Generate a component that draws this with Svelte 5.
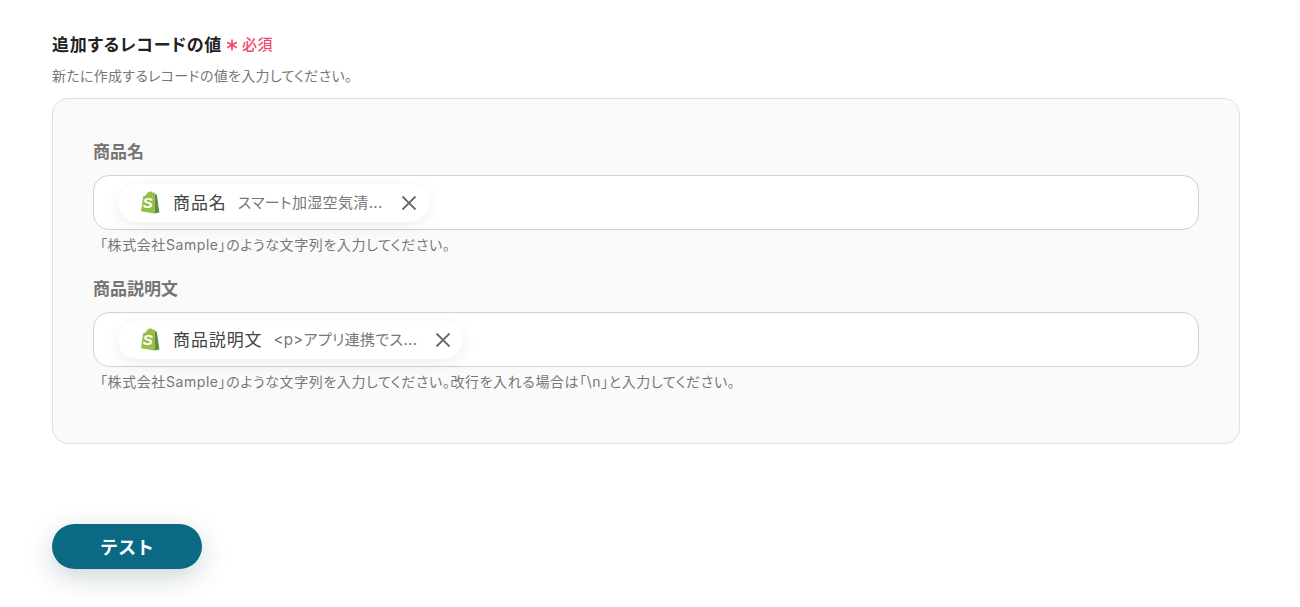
<script>
  const fields = [
    {
      label: "商品名",
      value: "スマート加湿空気清...",
      hint: "「株式会社Sample」のような文字列を入力してください。"
    },
    {
      label: "商品説明文",
      value: "<p>アプリ連携でス...",
      hint: "「株式会社Sample」のような文字列を入力してください。改行を入れる場合は「\\n」と入力してください。"
    }
  ];
</script>

<div class="page">
  <div class="title-row">
    <span class="title">追加するレコードの値</span>
    <svg class="star" viewBox="0 0 12 12" width="12" height="12">
      <path d="M6 0.5 V11.5 M1.2 3.2 L10.8 8.8 M10.8 3.2 L1.2 8.8" stroke="#f4476b" stroke-width="1.7" fill="none" />
    </svg>
    <span class="required">必須</span>
  </div>
  <p class="desc">新たに作成するレコードの値を入力してください。</p>

  <div class="card">
    {#each fields as field}
      <div class="field">
        <div class="label">{field.label}</div>
        <div class="input">
          <div class="chip">
            <svg class="logo" viewBox="0 0 20 23" width="20" height="23">
              <path d="M3.2 5.2 L1 20.2 L14.6 22.6 L14.6 1.6 C14 1.6 13.3 1.8 12.9 2 C12.4 0.8 11.5 0.4 10.6 0.4 C8.6 0.2 6.6 2.4 5.8 4.4 Z" fill="#95bf47" />
              <path d="M14.6 1.6 L14.6 22.6 L19.4 21.4 L16.8 3.6 L15.4 3.4 Z" fill="#5e8e3e" />
              <text x="7.8" y="17.4" class="logo-s">S</text>
            </svg>
            <span class="name">{field.label}</span>
            <span class="value">{field.value}</span>
            <svg class="close" viewBox="0 0 16 16" width="16" height="16">
              <path d="M1.5 1.5 L14.5 14.5 M14.5 1.5 L1.5 14.5" stroke="#6b6b6b" stroke-width="1.8" fill="none" />
            </svg>
          </div>
        </div>
        <div class="hint">{field.hint}</div>
      </div>
    {/each}
  </div>

  <button class="test">テスト</button>
</div>

<style>
  :global(body) {
    background: #fff;
  }
  .page {
    width: 1188px;
    margin-left: 52px;
    padding-top: 31px;
    padding-bottom: 38px;
    font-family: Inter, "Noto Sans CJK JP", sans-serif;
    font-feature-settings: "palt";
  }
  .title-row {
    display: flex;
    align-items: center;
    height: 24px;
  }
  .title {
    font-size: 17px;
    font-weight: 700;
    letter-spacing: 0.75px;
    color: #222;
  }
  .star {
    margin-left: 4px;
    margin-top: 4px;
  }
  .required {
    font-size: 15px;
    font-weight: 500;
    letter-spacing: 0.5px;
    color: #f4476b;
    margin-left: 4px;
  }
  .desc {
    margin: 11px 0 0;
    font-size: 14px;
    line-height: 20px;
    letter-spacing: 0.3px;
    color: #777;
  }
  .card {
    box-sizing: border-box;
    height: 346px;
    margin-top: 12px;
    padding: 40px;
    background: #fafafa;
    border: 1px solid #e0e0e0;
    border-radius: 16px;
  }
  .field {
    margin-bottom: 21px;
  }
  .label {
    font-size: 17px;
    line-height: 26px;
    font-weight: 700;
    color: #757575;
  }
  .input {
    box-sizing: border-box;
    height: 55px;
    margin-top: 10px;
    padding-left: 24px;
    display: flex;
    align-items: center;
    background: #fff;
    border: 1px solid #cdd0d8;
    border-radius: 16px;
  }
  .chip {
    display: flex;
    align-items: center;
    height: 38px;
    padding: 0 12px 0 22px;
    background: #fff;
    border-radius: 19px;
    box-shadow: 0 4px 16px rgba(0, 0, 0, 0.07);
  }
  .logo {
    flex: none;
  }
  .logo-s {
    font-family: "Liberation Sans", sans-serif;
    font-size: 15px;
    font-style: italic;
    font-weight: 700;
    fill: #fff;
    text-anchor: middle;
  }
  .name {
    margin-left: 13px;
    padding-bottom: 3px;
    font-size: 17px;
    letter-spacing: 0.9px;
    color: #444;
  }
  .value {
    margin-left: 11px;
    padding-bottom: 3px;
    font-size: 15px;
    letter-spacing: 0.35px;
    color: #777;
  }
  .close {
    margin-left: 18px;
    flex: none;
  }
  .hint {
    margin-top: 5px;
    padding-left: 7px;
    font-size: 14px;
    line-height: 20px;
    letter-spacing: 0.58px;
    color: #777;
  }
  .test {
    display: block;
    width: 150px;
    height: 45px;
    margin-top: 80px;
    padding-bottom: 3px;
    border: none;
    border-radius: 23px;
    background: #0a6a84;
    color: #fff;
    font-family: inherit;
    font-size: 18px;
    font-weight: 700;
    box-shadow: 0 8px 28px rgba(0, 40, 60, 0.2);
  }
</style>
